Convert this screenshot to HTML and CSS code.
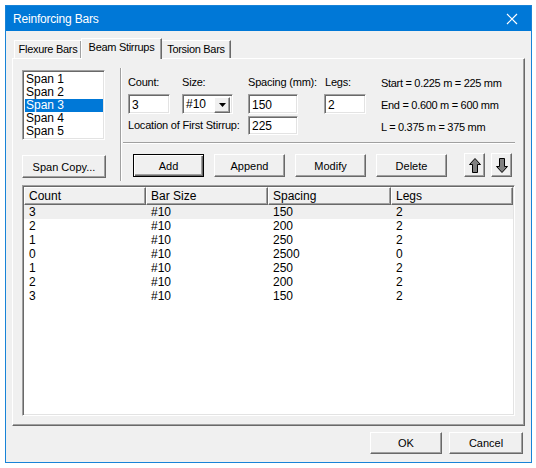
FILE: index.html
```html
<!DOCTYPE html>
<html lang="en">
  <head>
    <meta charset="UTF-8" />
    <title>Reinforcing Bars</title>
    <link rel="stylesheet" href="styles.css">
  </head>
  <body>
    <div class="window">
      <div class="titlebar">
        <span class="title">Reinforcing Bars</span>
        <svg class="close" width="12" height="12" viewBox="0 0 12 12">
          <path d="M1 1 L11 11 M11 1 L1 11" stroke="#fff" stroke-width="1.2" fill="none" />
        </svg>
      </div>

      <div class="tabs">
        <div class="tab tab-first">Flexure Bars</div>
        <div class="tab active">Beam Stirrups</div>
        <div class="tab">Torsion Bars</div>
      </div>

      <div class="panel">
        <div class="top">
          <div class="left-col">
            <div class="listbox">
              <div class="item">Span 1</div>
              <div class="item">Span 2</div>
              <div class="item selected">Span 3</div>
              <div class="item">Span 4</div>
              <div class="item">Span 5</div>
            </div>
            <button class="btn span-copy">Span Copy...</button>
          </div>

          <div class="vsep"></div>

          <div class="right-col">
            <div class="fields">
              <label class="lbl">Count:</label>
              <label class="lbl">Size:</label>
              <label class="lbl">Spacing (mm):</label>
              <label class="lbl">Legs:</label>
              <div class="info">
                <div>Start = 0.225 m = 225 mm</div>
                <div>End = 0.600 m = 600 mm</div>
                <div>L = 0.375 m = 375 mm</div>
              </div>

              <div class="input w-count">3</div>
              <div class="select">
                <span class="select-val">#10</span>
                <span class="drop">
                  <svg width="7" height="4" viewBox="0 0 7 4"><path d="M0 0 H7 L3.5 4 Z" fill="#000" /></svg>
                </span>
              </div>
              <div class="input w-spacing">150</div>
              <div class="input w-legs">2</div>

              <label class="lbl loc-lbl">Location of First Stirrup:</label>
              <div class="input w-spacing loc-input">225</div>
            </div>

            <div class="hsep"></div>

            <div class="actions">
              <button class="btn act default">Add</button>
              <button class="btn act">Append</button>
              <button class="btn act">Modify</button>
              <button class="btn act">Delete</button>
              <button class="btn arrow up">
                <svg width="12" height="15" viewBox="0 0 12 15"><path d="M6 0.5 L11.5 6.5 H8.5 V14.5 H3.5 V6.5 H0.5 Z" fill="#808080" stroke="#000" stroke-width="1" /></svg>
              </button>
              <button class="btn arrow down">
                <svg width="12" height="15" viewBox="0 0 12 15"><path d="M6 14.5 L11.5 8.5 H8.5 V0.5 H3.5 V8.5 H0.5 Z" fill="#808080" stroke="#000" stroke-width="1" /></svg>
              </button>
            </div>
          </div>
        </div>

        <div class="listview">
          <div class="lv-head">
            <div class="hcell c1">Count</div>
            <div class="hcell c2">Bar Size</div>
            <div class="hcell c3">Spacing</div>
            <div class="hcell c4">Legs</div>
          </div>
          <div class="lv-body" id="rows"></div>
        </div>
      </div>

      <div class="footer">
        <button class="btn ok">OK</button>
        <button class="btn cancel">Cancel</button>
      </div>
    </div>

    <script>
      const rows = [
        ["3", "#10", "150", "2"],
        ["2", "#10", "200", "2"],
        ["1", "#10", "250", "2"],
        ["0", "#10", "2500", "0"],
        ["1", "#10", "250", "2"],
        ["2", "#10", "200", "2"],
        ["3", "#10", "150", "2"],
      ];

      const rowsEl = document.getElementById("rows");
      rows.forEach((r, i) => {
        const row = document.createElement("div");
        row.classList.add("lv-row");
        if (i === 0) row.classList.add("hot");
        r.forEach((val, j) => {
          const cell = document.createElement("div");
          cell.classList.add("cell", "c" + (j + 1));
          cell.innerText = val;
          row.appendChild(cell);
        });
        rowsEl.appendChild(row);
      });
    </script>
  </body>
</html>
```

FILE: styles.css
```css
* {
  box-sizing: border-box;
}

body {
  margin: 0;
  padding: 5px;
  background: #fff;
  font-family: "Liberation Sans", Arial, sans-serif;
  font-size: 11px;
  color: #000;
}

.window {
  width: 527px;
  height: 458px;
  border: 1px solid #1883d7;
  background: #f0f0f0;
}

.titlebar {
  height: 25px;
  background: #0078d7;
  color: #fff;
  display: flex;
  align-items: center;
  justify-content: space-between;
  padding: 0 13px 0 7px;
}

.title {
  font-size: 12px;
  letter-spacing: -0.2px;
}

/* tabs */
.tabs {
  display: flex;
  align-items: flex-end;
  height: 20px;
  margin: 7px 0 0 8px;
}

.tab {
  height: 18px;
  line-height: 17px;
  padding: 0;
  white-space: nowrap;
  font-size: 11px;
  letter-spacing: -0.3px;
  border-top: 1px solid #fff;
  border-left: 1px solid #fff;
  border-right: 1px solid #696969;
  box-shadow: inset -1px 0 #a0a0a0;
  background: #f0f0f0;
  text-align: center;
}

.tab-first {
  width: 68px;
}

.tab.active {
  position: relative;
  z-index: 1;
  width: 81px;
  height: 21px;
  margin: 0 -1px -1px -1px;
  line-height: 16px;
}

.tab:last-child {
  width: 70px;
}

/* panel */
.panel {
  width: 513px;
  height: 368px;
  margin-left: 6px;
  border: 1px solid;
  border-color: #fff #696969 #696969 #fff;
  box-shadow: inset -1px -1px #a0a0a0;
  padding: 11px 0 0 9px;
}

.top {
  display: flex;
  align-items: flex-start;
}

.left-col {
  width: 84px;
}

.listbox {
  width: 83px;
  height: 70px;
  background: #fff;
  border: 1px solid;
  border-color: #a0a0a0 #fff #fff #a0a0a0;
  box-shadow: inset 1px 1px #696969, inset -1px -1px #e3e3e3;
  padding: 2px 1px 0 2px;
}

.item {
  height: 13px;
  line-height: 13px;
  padding-left: 1px;
  font-size: 12px;
}

.item.selected {
  background: #0078d7;
  color: #fff;
}

.btn {
  font-family: "Liberation Sans", Arial, sans-serif;
  font-size: 11px;
  color: #000;
  background: #f0f0f0;
  height: 23px;
  padding: 0;
  margin: 0;
  border: 1px solid;
  border-color: #fff #696969 #696969 #fff;
  box-shadow: inset -1px -1px #a0a0a0;
}

.span-copy {
  width: 84px;
  margin-top: 15px;
}

.vsep {
  width: 2px;
  height: 113px;
  margin: -2px 0 0 14px;
  border-left: 1px solid #a0a0a0;
  border-right: 1px solid #fff;
}

.right-col {
  width: 392px;
  margin-left: 1px;
}

.fields {
  display: grid;
  grid-template-columns: 54px 66px 77px 56px 1fr;
  grid-template-rows: 18px 22px 19px;
  padding: 6px 0 0 5px;
}

.lbl {
  line-height: 13px;
  letter-spacing: -0.2px;
}

.loc-lbl {
  grid-column: 1 / 3;
  align-self: center;
}

.info {
  grid-column: 5;
  grid-row: 1 / 4;
  margin-top: -4px;
  line-height: 22px;
  letter-spacing: -0.3px;
}

.input {
  height: 20px;
  background: #fff;
  border: 1px solid;
  border-color: #a0a0a0 #fff #fff #a0a0a0;
  box-shadow: inset 1px 1px #696969, inset -1px -1px #e3e3e3;
  padding: 3px 0 0 3px;
  font-size: 12px;
  line-height: 14px;
}

.w-count {
  width: 42px;
}

.w-spacing {
  width: 50px;
}

.w-legs {
  width: 42px;
  margin-left: -1px;
}

.loc-input {
  grid-column: 3;
  height: 19px;
  padding-top: 2px;
}

.select {
  width: 51px;
  height: 20px;
  display: flex;
  background: #fff;
  border: 1px solid;
  border-color: #a0a0a0 #fff #fff #a0a0a0;
  box-shadow: inset 1px 1px #696969, inset -1px -1px #e3e3e3;
  padding: 2px;
}

.select-val {
  flex: 1;
  font-size: 12px;
  line-height: 15px;
  padding-left: 1px;
}

.drop {
  width: 16px;
  height: 16px;
  display: flex;
  align-items: center;
  justify-content: center;
  background: #f0f0f0;
  border: 1px solid;
  border-color: #fff #696969 #696969 #fff;
  box-shadow: inset -1px -1px #a0a0a0;
}

.hsep {
  height: 2px;
  margin-top: 7px;
  border-top: 1px solid #a0a0a0;
  border-bottom: 1px solid #fff;
}

.actions {
  display: flex;
  margin-top: 10px;
  padding-left: 10px;
}

.act {
  width: 71px;
  margin-right: 10px;
}

.act.default {
  border: 1px solid #000;
  box-shadow: inset 1px 1px #fff, inset -1px -1px #696969, inset -2px -2px #a0a0a0;
}

.act:nth-child(4) {
  margin-right: 17px;
}

.arrow {
  width: 21px;
  height: 24px;
  display: flex;
  align-items: center;
  justify-content: center;
  margin-top: -1px;
}

.arrow.up {
  margin-right: 6px;
}

/* list view */
.listview {
  width: 493px;
  height: 231px;
  margin-top: 4px;
  background: #fff;
  border: 1px solid;
  border-color: #a0a0a0 #fff #fff #a0a0a0;
  box-shadow: inset 1px 1px #696969, inset -1px -1px #e3e3e3;
  padding: 1px;
}

.lv-head {
  display: flex;
  height: 18px;
}

.hcell {
  height: 18px;
  line-height: 16px;
  padding-left: 4px;
  font-size: 12px;
  background: #f0f0f0;
  border: 1px solid;
  border-color: #fff #696969 #696969 #fff;
  box-shadow: inset -1px -1px #a0a0a0;
}

.c1 {
  width: 122px;
}

.c2 {
  width: 122px;
}

.c3 {
  width: 123px;
}

.c4 {
  width: 122px;
}

.lv-row {
  display: flex;
  height: 14px;
  line-height: 14px;
  font-size: 12px;
}

.lv-row.hot {
  background: #efefef;
}

.cell {
  padding-left: 5px;
}

.footer {
  display: flex;
  justify-content: flex-end;
  gap: 7px;
  padding: 6px 8px 0 0;
}

.ok {
  width: 72px;
  height: 22px;
}

.cancel {
  width: 74px;
  height: 22px;
}
```
